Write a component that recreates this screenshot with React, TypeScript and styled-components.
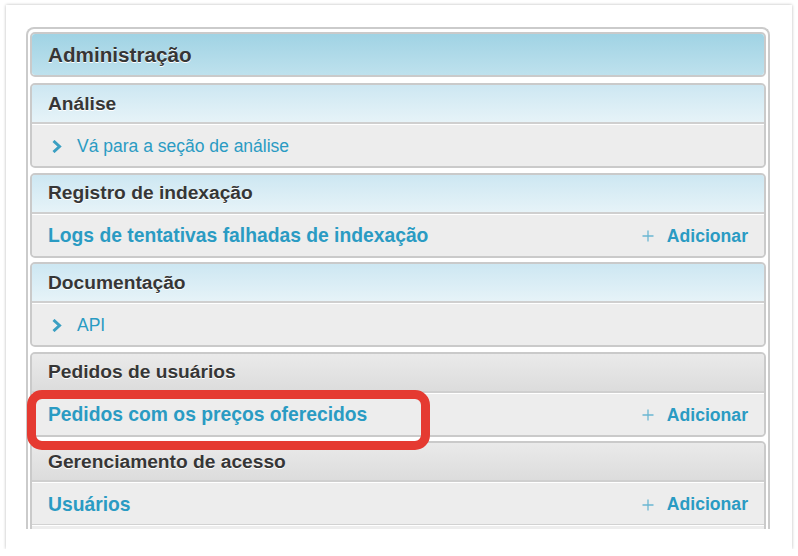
import React from 'react';
import styled, {createGlobalStyle, css} from 'styled-components';

const GlobalStyle = createGlobalStyle`
  html, body {
    margin: 0;
    padding: 0;
    background: #ffffff;
  }
  body {
    font-family: 'Liberation Sans', Arial, Helvetica, sans-serif;
  }
`;

const Card = styled.div`
  position: relative;
  box-sizing: border-box;
  width: 786px;
  height: 544px;
  margin: 5px 0 0 6px;
  padding: 22px 22px 20px 20px;
  background: #ffffff;
  box-shadow: 0 0 3px rgba(0, 0, 0, 0.28);
`;

const Clip = styled.div`
  height: 502px;
  overflow: hidden;
`;

const Panel = styled.div`
  border: 2px solid #cbcbcb;
  border-bottom: none;
  border-radius: 8px 8px 0 0;
  padding: 3px 2px 0 2px;
  display: flex;
  flex-direction: column;
  gap: 4.5px;
`;

type Tone = 'primary' | 'blue' | 'gray';

const tones = {
  primary: css`
    background: linear-gradient(to bottom, #a0d3e4, #bee1ed);
  `,
  blue: css`
    background: linear-gradient(to bottom, #cde7f2, #e6f3f8);
  `,
  gray: css`
    background: linear-gradient(to bottom, #eaeaea, #dcdcdc);
  `
};

const Module = styled.section<{$main?: boolean}>`
  border: 2px solid #cacaca;
  border-radius: 5px;
  overflow: hidden;
  background: #ededed;
  ${(p) => p.$main && 'margin-bottom: 1.5px;'}
`;

const Header = styled.h2<{$tone: Tone; $main?: boolean}>`
  margin: 0;
  box-sizing: border-box;
  display: flex;
  align-items: center;
  height: ${(p) => (p.$main ? '41px' : '39px')};
  padding: 0 16px;
  font-size: ${(p) => (p.$main ? '20.7px' : '19.2px')};
  font-weight: 700;
  color: #363636;
  text-shadow: 0 1px 0 #ffffff;
  ${(p) => tones[p.$tone]}
  ${(p) => !p.$main && 'border-bottom: 2px solid #cfcfcf;'}
`;

const Row = styled.div`
  box-sizing: border-box;
  display: flex;
  align-items: center;
  justify-content: space-between;
  height: 42px;
  padding: 2px 16px 0 16px;
  border-top: 1px solid #ffffff;
  background: #ededed;
  & + & {
    border-top: 1px solid #d2d2d2;
    box-shadow: inset 0 1px 0 #ffffff;
  }
`;

const Link = styled.a<{$strong?: boolean}>`
  display: inline-flex;
  align-items: center;
  color: #2a9bc3;
  text-decoration: none;
  font-size: ${(p) => (p.$strong ? '19.3px' : '17.5px')};
  font-weight: ${(p) => (p.$strong ? 700 : 400)};
`;

const AddLink = styled.a`
  display: inline-flex;
  align-items: center;
  color: #2a9bc3;
  text-decoration: none;
  font-size: 17.6px;
  font-weight: 700;
`;

const Chevron = styled.svg`
  width: 29px;
  height: 13px;
  flex: none;
`;

const Plus = styled.svg`
  width: 12px;
  height: 12px;
  margin-right: 13px;
  flex: none;
`;

const Highlight = styled.div`
  position: absolute;
  left: 21px;
  top: 385px;
  box-sizing: border-box;
  width: 403px;
  height: 60px;
  border: 9px solid #e53a31;
  border-radius: 15px;
  pointer-events: none;
`;

function ChevronIcon() {
  return (
    <Chevron viewBox="0 0 29 13">
      <path d="M5.5 1 L11.5 6.5 L5.5 12" fill="none" stroke="#3a9fc2" strokeWidth="3" />
    </Chevron>
  );
}

function AddButton() {
  return (
    <AddLink href="#">
      <Plus viewBox="0 0 12 12">
        <path d="M6 0.5 V11.5 M0.5 6 H11.5" stroke="#6ab6d2" strokeWidth="1.3" />
      </Plus>
      Adicionar
    </AddLink>
  );
}

type Item = {label: string; strong?: boolean; add?: boolean};

const sections: {title: string; tone: Tone; items: Item[]}[] = [
  {title: 'Análise', tone: 'blue', items: [{label: 'Vá para a seção de análise'}]},
  {
    title: 'Registro de indexação',
    tone: 'blue',
    items: [{label: 'Logs de tentativas falhadas de indexação', strong: true, add: true}]
  },
  {title: 'Documentação', tone: 'blue', items: [{label: 'API'}]},
  {
    title: 'Pedidos de usuários',
    tone: 'gray',
    items: [{label: 'Pedidos com os preços oferecidos', strong: true, add: true}]
  },
  {
    title: 'Gerenciamento de acesso',
    tone: 'gray',
    items: [{label: 'Usuários', strong: true, add: true}, {label: ''}]
  }
];

export default function App() {
  return (
    <>
      <GlobalStyle />
      <Card>
        <Clip>
          <Panel>
            <Module $main>
              <Header $tone="primary" $main>
                Administração
              </Header>
            </Module>
            {sections.map((s) => (
              <Module key={s.title}>
                <Header $tone={s.tone}>{s.title}</Header>
                {s.items.map((it, i) => (
                  <Row key={i}>
                    {it.label && (
                      <Link href="#" $strong={it.strong}>
                        {!it.strong && <ChevronIcon />}
                        {it.label}
                      </Link>
                    )}
                    {it.add && <AddButton />}
                  </Row>
                ))}
              </Module>
            ))}
          </Panel>
        </Clip>
        <Highlight />
      </Card>
    </>
  );
}
